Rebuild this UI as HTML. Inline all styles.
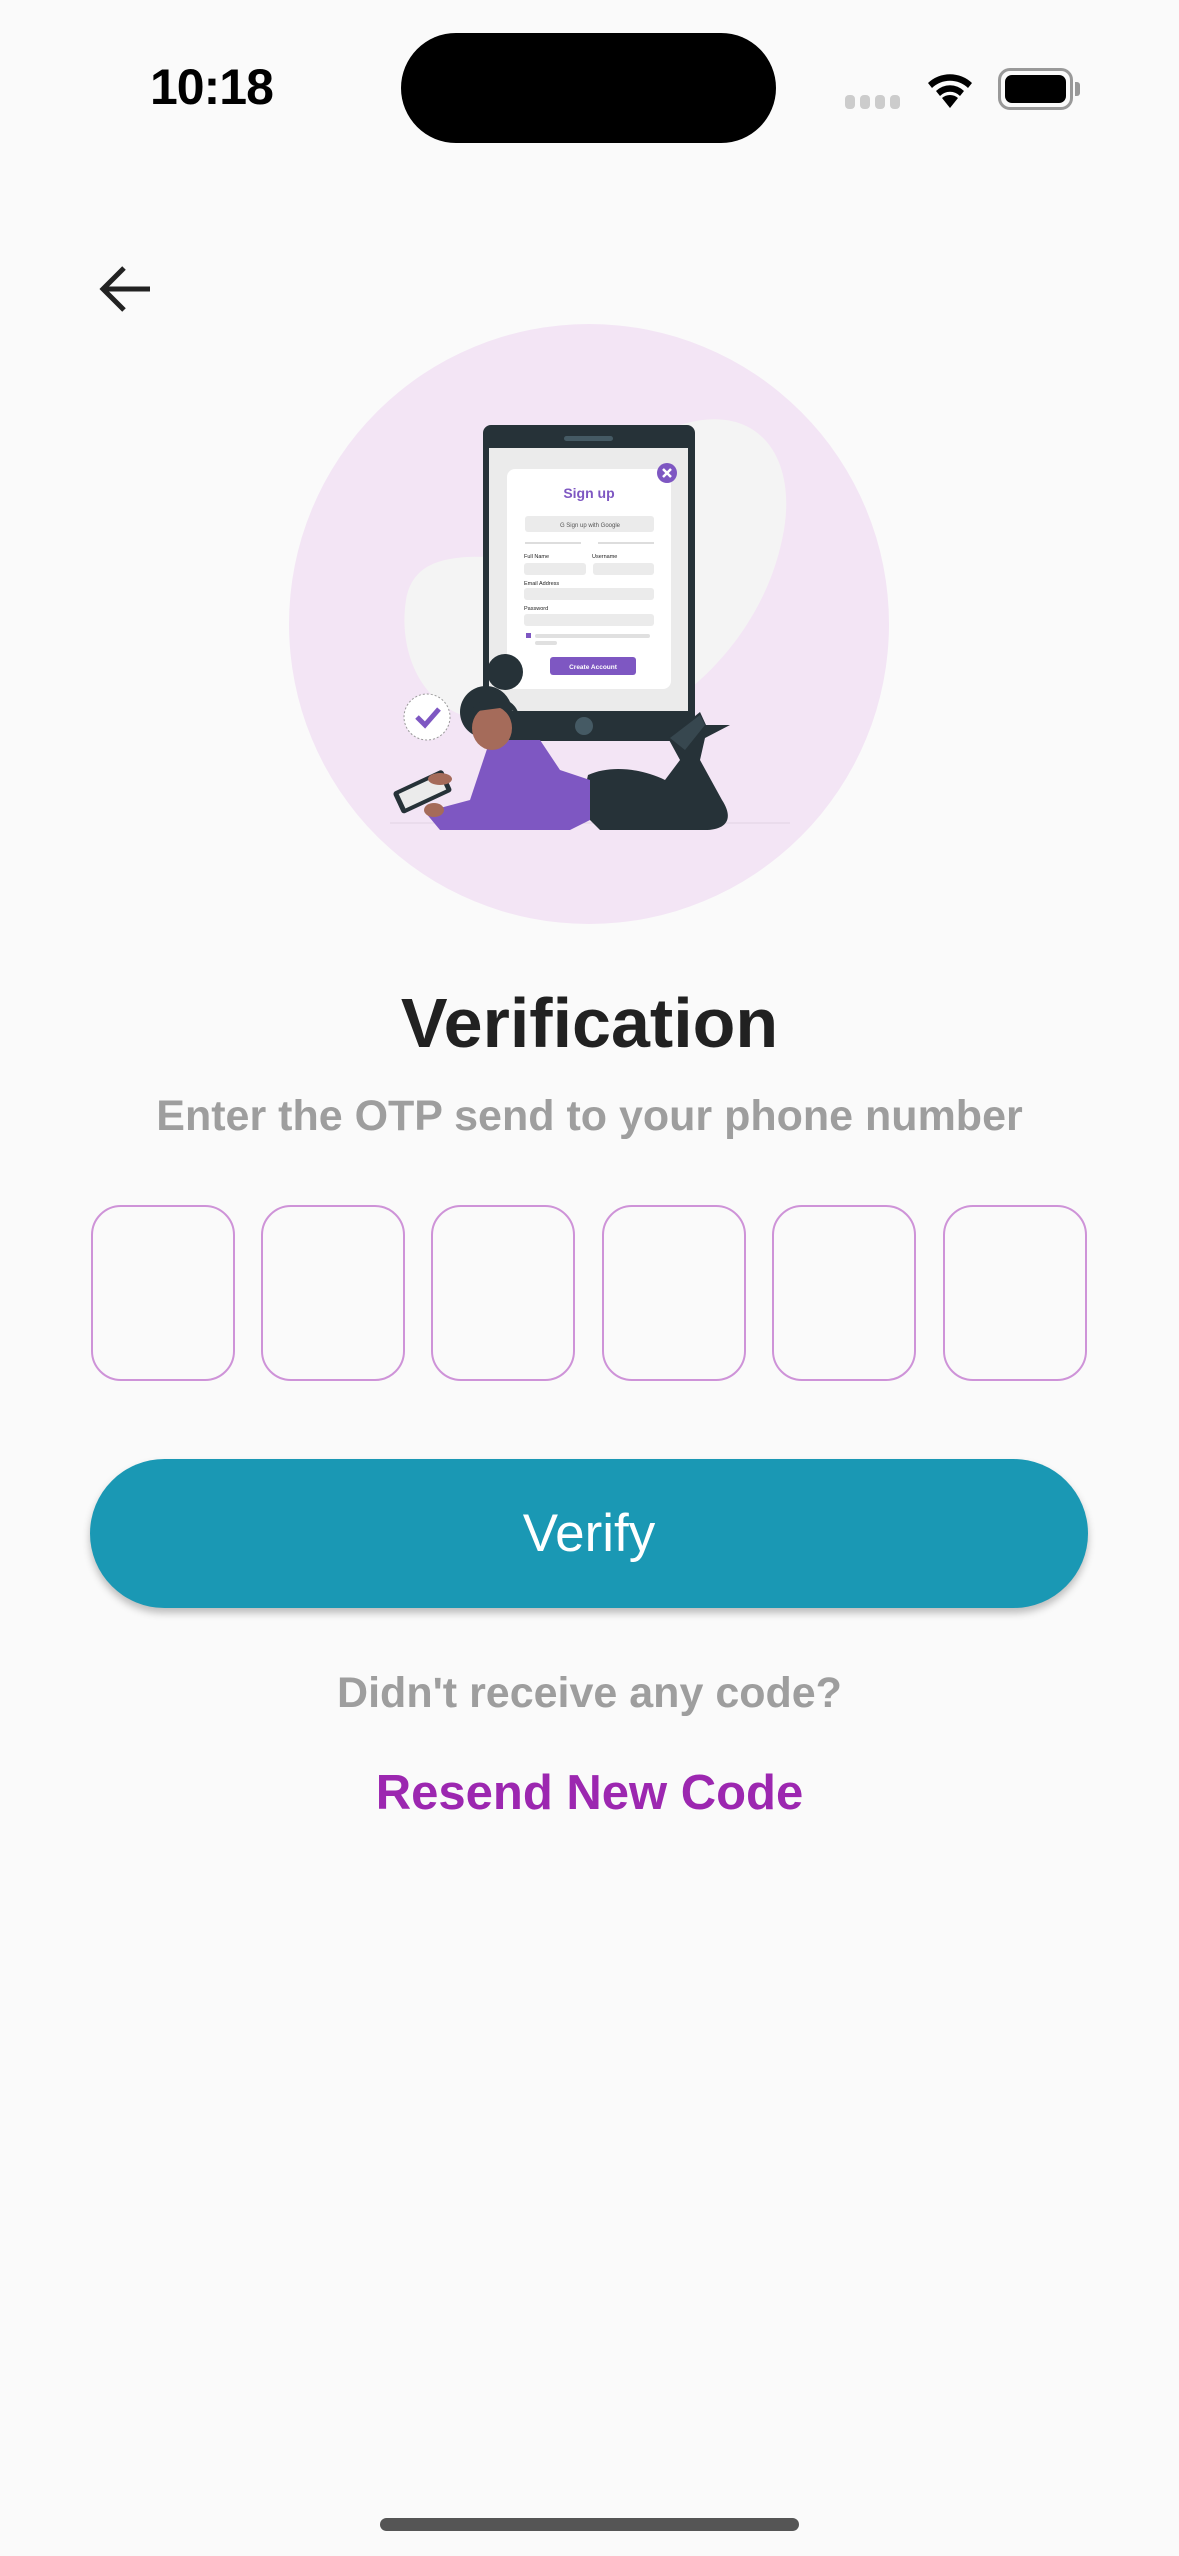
<!DOCTYPE html>
<html><head><meta charset="utf-8"><style>
*{margin:0;padding:0;box-sizing:border-box}
body{width:1179px;height:2556px;background:#fafafa;position:relative;overflow:hidden;font-family:"Liberation Sans",sans-serif}
.a{position:absolute}
.t{position:absolute;left:0;width:1179px;text-align:center;font-weight:bold}
.box{position:absolute;top:1205px;width:144px;height:176px;border:2.5px solid #ce93d8;border-radius:30px}
</style></head><body>
<div class="a" style="left:150px;top:58px;font-size:50px;font-weight:bold;color:#000;letter-spacing:-1px">10:18</div>
<div class="a" style="left:401px;top:33px;width:375px;height:110px;background:#000;border-radius:55px"></div>
<div class="a" style="left:845px;top:95px;width:60px;height:14px;display:flex;gap:5px"><i style="width:10px;height:14px;background:#ccc;border-radius:4px"></i><i style="width:10px;height:14px;background:#ccc;border-radius:4px"></i><i style="width:10px;height:14px;background:#ccc;border-radius:4px"></i><i style="width:10px;height:14px;background:#ccc;border-radius:4px"></i></div>
<svg class="a" style="left:922px;top:68px" width="56" height="42" viewBox="0 0 56 42"><path d="M28 40 L20 30 A12 12 0 0 1 36 30 Z" fill="#000"/><path d="M14 23 A20 20 0 0 1 42 23 L38 28 A14 14 0 0 0 18 28Z" fill="#000"/><path d="M6 15 A32 32 0 0 1 50 15 L46 20 A26 26 0 0 0 10 20Z" fill="#000"/></svg>
<div class="a" style="left:998px;top:68px;width:75px;height:42px;border:3px solid #999;border-radius:12px;padding:4px"><div style="width:100%;height:100%;background:#000;border-radius:7px"></div></div>
<div class="a" style="left:1075px;top:82px;width:5px;height:14px;background:#999;border-radius:0 3px 3px 0"></div>
<svg class="a" style="left:98px;top:264px" width="56" height="50" viewBox="0 0 56 50"><path d="M52 25 H6 M26 4 L5 25 L26 46" stroke="#222" stroke-width="5" fill="none"/></svg>
<svg class="a" style="left:0;top:0" width="1179" height="1000">
<circle cx="589" cy="624" r="300" fill="#f3e5f5"/>
<path d="M680 425 C760 400 800 460 782 540 C765 620 710 680 660 710 L480 720 C420 710 398 650 406 600 C412 565 440 555 490 557 Z" fill="#f4f4f4"/>
<rect x="483" y="425" width="212" height="316" rx="8" fill="#263238"/>
<rect x="564" y="436" width="49" height="5" rx="2.5" fill="#455a64"/>
<rect x="489" y="448" width="199" height="263" fill="#ebebeb"/>
<circle cx="584" cy="726" r="9" fill="#455a64"/>
<rect x="507" y="469" width="164" height="220" rx="8" fill="#fff"/>
<circle cx="667" cy="473" r="10" fill="#7e57c2"/>
<path d="M663 469 L671 477 M671 469 L663 477" stroke="#fff" stroke-width="2.5"/>
<text x="589" y="498" font-size="14" font-weight="bold" fill="#7e57c2" text-anchor="middle">Sign up</text>
<rect x="525" y="516" width="129" height="16" rx="3" fill="#ebebeb"/>
<text x="590" y="527" font-size="6" fill="#555" text-anchor="middle">G  Sign up with Google</text>
<line x1="525" y1="543" x2="581" y2="543" stroke="#bbb"/><line x1="598" y1="543" x2="654" y2="543" stroke="#bbb"/>
<text x="524" y="558" font-size="5.5" fill="#222">Full Name</text><text x="592" y="558" font-size="5.5" fill="#222">Username</text>
<rect x="524" y="563" width="62" height="12" rx="3" fill="#ebebeb"/><rect x="593" y="563" width="61" height="12" rx="3" fill="#ebebeb"/>
<text x="524" y="585" font-size="5.5" fill="#222">Email Address</text>
<rect x="524" y="588" width="130" height="12" rx="3" fill="#ebebeb"/>
<text x="524" y="610" font-size="5.5" fill="#222">Password</text>
<rect x="524" y="614" width="130" height="12" rx="3" fill="#ebebeb"/>
<rect x="526" y="633" width="5" height="5" fill="#7e57c2"/><rect x="535" y="634" width="115" height="4" rx="2" fill="#e0e0e0"/><rect x="535" y="641" width="22" height="4" rx="2" fill="#e0e0e0"/>
<rect x="550" y="657" width="86" height="18" rx="3" fill="#7e57c2"/>
<text x="593" y="669" font-size="6.5" font-weight="bold" fill="#fff" text-anchor="middle">Create Account</text>
<line x1="390" y1="823" x2="790" y2="823" stroke="#e0d4e4" stroke-width="1"/>
<circle cx="427" cy="717" r="23" fill="#fff" stroke="#999" stroke-dasharray="2 2"/>
<path d="M417 717 L425 725 L439 709" stroke="#7e57c2" stroke-width="5" fill="none"/>
<path d="M588 775 C610 765 640 768 665 780 L680 760 L668 738 L700 712 L706 725 L730 725 L705 738 L700 760 L722 800 C735 820 725 830 705 830 L600 830 L580 810 Z" fill="#263238"/>
<path d="M670 738 L700 715 L705 725 L685 750 Z" fill="#37474f"/>
<path d="M490 740 L540 740 L560 770 L590 780 L590 820 L570 830 L440 830 L425 812 L470 800 L480 770 Z" fill="#7e57c2"/>
<circle cx="486" cy="712" r="26" fill="#263238"/>
<circle cx="505" cy="672" r="18" fill="#263238"/>
<ellipse cx="492" cy="728" rx="20" ry="22" fill="#a56b5a"/>
<path d="M470 712 C480 695 510 692 518 712 L500 708 Z" fill="#263238"/>
<g transform="rotate(-25 422 792)"><rect x="395" y="780" width="55" height="24" rx="3" fill="#263238"/><rect x="400" y="784" width="45" height="16" fill="#ebebeb"/></g>
<ellipse cx="434" cy="810" rx="10" ry="7" fill="#a56b5a"/>
<ellipse cx="440" cy="779" rx="12" ry="6" fill="#a56b5a"/>
</svg>
<div class="t" style="top:983px;font-size:70px;color:#212121">Verification</div>
<div class="t" style="top:1092px;font-size:43px;color:#9e9e9e">Enter the OTP send to your phone number</div>
<div class="box" style="left:91px"></div><div class="box" style="left:261px"></div><div class="box" style="left:431px"></div><div class="box" style="left:602px"></div><div class="box" style="left:772px"></div><div class="box" style="left:943px"></div>
<div class="a" style="left:90px;top:1459px;width:998px;height:149px;background:#1a98b4;border-radius:75px;box-shadow:0 5px 8px rgba(0,0,0,.25);color:#fff;font-size:53px;text-align:center;line-height:149px">Verify</div>
<div class="t" style="top:1669px;font-size:43px;color:#9e9e9e">Didn't receive any code?</div>
<div class="t" style="top:1765px;font-size:49px;color:#9c27b0">Resend New Code</div>
<div class="a" style="left:380px;top:2518px;width:419px;height:13px;background:#555;border-radius:7px"></div>
</body></html>
